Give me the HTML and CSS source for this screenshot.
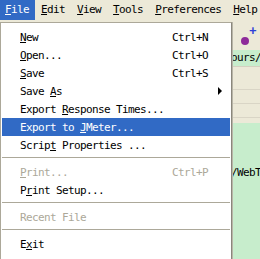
FILE: index.html
```html
<!DOCTYPE html>
<html lang="en">
  <head>
    <meta charset="UTF-8" />
    <title>File menu</title>
    <link rel="stylesheet" href="styles.css">
  </head>
  <body>
    <!-- Menu bar -->
    <div class="menubar">
      <span class="menubar-item open"><u>F</u>ile</span>
      <span class="menubar-item"><u>E</u>dit</span>
      <span class="menubar-item"><u>V</u>iew</span>
      <span class="menubar-item"><u>T</u>ools</span>
      <span class="menubar-item"><u>P</u>references</span>
      <span class="menubar-item"><u>H</u>elp</span>
    </div>

    <!-- Window content behind the menu -->
    <div class="toolbar">
      <span class="tool plus">+</span>
      <span class="tool dot"></span>
      <span class="tool plus">+</span>
    </div>
    <div class="path-field">ours/</div>
    <div class="grid-panel">
      <div class="grid-row"></div>
      <div class="grid-row"></div>
      <div class="grid-row"></div>
    </div>
    <div class="script-area">
      <div class="script-line">/WebT</div>
    </div>

    <!-- File dropdown -->
    <div class="menu">
      <div class="menu-item"><span><u>N</u>ew</span><span class="key">Ctrl+N</span></div>
      <div class="menu-item"><span><u>O</u>pen...</span><span class="key">Ctrl+O</span></div>
      <div class="menu-item"><span><u>S</u>ave</span><span class="key">Ctrl+S</span></div>
      <div class="menu-item"><span>Save <u>A</u>s</span><span class="key"></span><span class="arrow"></span></div>
      <div class="menu-item"><span>Export <u>R</u>esponse Times...</span></div>
      <div class="menu-item active"><span>Export to <u>J</u>Meter...</span></div>
      <div class="menu-item"><span>Scrip<u>t</u> Properties ...</span></div>
      <div class="separator"></div>
      <div class="menu-item disabled"><span><u>P</u>rint...</span><span class="key">Ctrl+P</span></div>
      <div class="menu-item"><span>P<u>r</u>int Setup...</span></div>
      <div class="separator"></div>
      <div class="menu-item disabled"><span>Recent File</span></div>
      <div class="separator"></div>
      <div class="menu-item"><span>E<u>x</u>it</span></div>
    </div>
  </body>
</html>
```

FILE: styles.css
```css
body {
  margin: 0;
  font-family: "DejaVu Sans Mono", "Liberation Mono", monospace;
  font-size: 11px;
  letter-spacing: -0.62px;
  color: #000;
  background-color: #c7edcc;
  position: relative;
  height: 259px;
  overflow: hidden;
}
u {
  text-decoration: underline;
  text-underline-offset: 1px;
}

/* Menu bar */
.menubar {
  display: flex;
  height: 22px;
  margin-left: -1px;
  background-color: #ece9d8;
}
.menubar-item {
  height: 20px;
  line-height: 20px;
  padding: 0 6px;
  white-space: nowrap;
}
.menubar-item.open {
  background-color: #316ac5;
  color: #fff;
}

/* Content behind the dropdown */
.toolbar {
  display: flex;
  justify-content: flex-end;
  align-items: center;
  height: 28px;
  padding-right: 4px;
  background-color: #ece9d8;
}
.tool.plus {
  width: 7px;
  text-align: center;
  color: #2d3fd8;
  font-weight: bold;
  font-size: 12px;
  margin-top: -10px;
}
.tool.dot {
  width: 8px;
  height: 8px;
  margin: 10px 0 0 11px;
  border-radius: 50%;
  background-color: #8e2a9a;
}
.path-field {
  height: 16px;
  line-height: 16px;
  padding-left: 231px;
  background-color: #c7edcc;
  border-bottom: 1px solid #d4d0c0;
  white-space: nowrap;
  overflow: hidden;
}
.grid-panel {
  height: 56px;
  background-color: #ece9d8;
  padding-top: 13px;
  box-sizing: border-box;
}
.grid-row {
  height: 9px;
  border-bottom: 1px solid #d9d5c6;
  margin-bottom: 4px;
}
.script-area {
  padding-top: 43px;
}
.script-line {
  white-space: nowrap;
  padding-left: 231px;
}

/* Dropdown menu */
.menu {
  position: absolute;
  top: 22px;
  left: 0;
  width: 228px;
  padding: 5px 1px 10px;
  background-color: #fff;
  border: 1px solid #aca899;
  border-right-color: #8a877c;
  box-shadow: 1px 0 0 #b8b5a8;
}
.menu-item {
  display: grid;
  grid-template-columns: 152px 36px 1fr;
  align-items: center;
  height: 18px;
  padding-left: 18px;
  white-space: nowrap;
}
.menu-item.active {
  background-color: #316ac5;
  color: #fff;
}
.menu-item.disabled {
  color: #aca899;
}
.key {
  grid-column: 2;
}
.arrow {
  grid-column: 3;
  justify-self: end;
  margin-right: 8px;
  width: 0;
  height: 0;
  border-top: 4px solid transparent;
  border-bottom: 4px solid transparent;
  border-left: 4px solid #000;
}
.separator {
  height: 1px;
  margin: 3px 0 5px;
  background-color: #aca899;
}
```
